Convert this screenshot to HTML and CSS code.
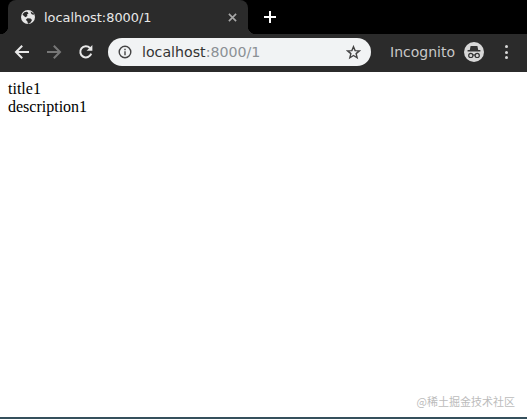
FILE: index.html
```html
<!DOCTYPE html>
<html lang="en">
<head>
    <meta charset="UTF-8">
    <title>localhost:8000/1</title>
    <link rel="stylesheet" href="styles.css">
</head>
<body>
    <div class="window">
        <!-- Tab strip -->
        <div class="tabstrip">
            <div class="tab">
                <svg class="favicon" viewBox="0 0 14 14" width="14" height="14">
                    <circle cx="7" cy="7" r="7" fill="#e6e6e6"/>
                    <path d="M1.5 4.5 C3 2 5 1.5 6.5 2 L7.5 3.4 L6 4.6 L6.4 6 L4.4 7.2 L3 6 Z M7 14 L6.4 11.4 L4.8 9.8 L6.4 8.2 L9.6 8.6 L11 10 L9.6 12.4 Z M9.5 1.4 L10.4 4 L12.6 5 L13 3.4 Z" fill="#2b2b2b"/>
                </svg>
                <span class="tab-title">localhost:8000/1</span>
                <svg class="tab-close" viewBox="0 0 10 10" width="9" height="9">
                    <path d="M1 1 L9 9 M9 1 L1 9" stroke="#a8a8a8" stroke-width="1.8"/>
                </svg>
            </div>
            <svg class="new-tab" viewBox="0 0 12 12" width="12" height="12">
                <path d="M6 0 V12 M0 6 H12" stroke="#fff" stroke-width="2"/>
            </svg>
        </div>

        <!-- Toolbar -->
        <div class="toolbar">
            <svg class="nav-icon" viewBox="0 0 16 16" width="16" height="16">
                <path d="M15 8 H2.5 M8.2 1.8 L2 8 L8.2 14.2" fill="none" stroke="#e8e8e8" stroke-width="2"/>
            </svg>
            <svg class="nav-icon" viewBox="0 0 16 16" width="16" height="16">
                <path d="M1 8 H13.5 M7.8 1.8 L14 8 L7.8 14.2" fill="none" stroke="#777" stroke-width="2"/>
            </svg>
            <svg class="nav-icon" viewBox="0 0 16 16" width="16" height="16">
                <path d="M13.2 9.6 A5.6 5.6 0 1 1 12 4" fill="none" stroke="#e8e8e8" stroke-width="2"/>
                <path d="M14.4 1 V6.8 H8.6 Z" fill="#e8e8e8"/>
            </svg>
            <div class="omnibox">
                <svg class="info-icon" viewBox="0 0 14 14" width="14" height="14">
                    <circle cx="7" cy="7" r="5.8" fill="none" stroke="#444" stroke-width="1.4"/>
                    <path d="M7 6.2 V10.2 M7 3.8 V5.2" stroke="#444" stroke-width="1.4"/>
                </svg>
                <span class="url">localhost<span class="url-rest">:8000/1</span></span>
                <svg class="star" viewBox="0 0 16 16" width="15" height="15">
                    <path d="M8 1.8 L9.7 6 L14.2 6.3 L10.8 9.2 L11.9 13.6 L8 11.2 L4.1 13.6 L5.2 9.2 L1.8 6.3 L6.3 6 Z" fill="none" stroke="#444" stroke-width="1.5"/>
                </svg>
            </div>
            <span class="incognito-label">Incognito</span>
            <svg class="incognito-icon" viewBox="0 0 20 20" width="20" height="20">
                <circle cx="10" cy="10" r="10" fill="#d8d8d8"/>
                <path d="M6.6 4 H13.4 L14.2 8 H16.4 V9.4 H3.6 V8 H5.8 Z" fill="#333"/>
                <circle cx="6.8" cy="13.4" r="2.1" fill="none" stroke="#333" stroke-width="1.2"/>
                <circle cx="13.2" cy="13.4" r="2.1" fill="none" stroke="#333" stroke-width="1.2"/>
                <path d="M8.9 13 H11.1" stroke="#333" stroke-width="1.1"/>
            </svg>
            <div class="menu">
                <span></span>
                <span></span>
                <span></span>
            </div>
        </div>

        <!-- Page -->
        <div class="page">
            <div>title1</div>
            <div>description1</div>
            <div class="watermark">@稀土掘金技术社区</div>
        </div>
    </div>
</body>
</html>
```

FILE: styles.css
```css
/* General Styles */
html, body {
    margin: 0;
    padding: 0;
}

.window {
    display: flex;
    flex-direction: column;
    width: 527px;
    height: 419px;
    overflow: hidden;
    font-family: "DejaVu Sans", sans-serif;
    border-bottom: 2px solid #35505c;
    box-sizing: border-box;
}

/* Tab strip */
.tabstrip {
    display: flex;
    align-items: center;
    height: 34px;
    background-color: #000;
}

.tab {
    position: relative;
    display: flex;
    align-items: center;
    width: 240px;
    height: 34px;
    margin-left: 8px;
    padding: 0 11px 0 13px;
    box-sizing: border-box;
    background-color: #2b2b2b;
    border-radius: 8px 8px 0 0;
}

/* curved feet at the bottom of the tab */
.tab::before,
.tab::after {
    content: "";
    position: absolute;
    bottom: 0;
    width: 8px;
    height: 8px;
}

.tab::before {
    left: -8px;
    background: radial-gradient(circle at 0 0, #000 8px, #2b2b2b 8.5px);
}

.tab::after {
    right: -8px;
    background: radial-gradient(circle at 100% 0, #000 8px, #2b2b2b 8.5px);
}

.tab-title {
    flex: 1;
    margin-left: 9px;
    color: #e8e8e8;
    font-size: 12.9px;
}

.new-tab {
    margin-left: 16px;
}

/* Toolbar */
.toolbar {
    display: flex;
    align-items: center;
    height: 38px;
    padding-bottom: 2px;
    box-sizing: border-box;
    background-color: #2b2b2b;
}

.nav-icon {
    margin-left: 16px;
}

.nav-icon:first-child {
    margin-left: 14px;
}

.omnibox {
    display: flex;
    align-items: center;
    width: 263px;
    height: 28px;
    margin-left: 14px;
    padding: 0 10px;
    box-sizing: border-box;
    background-color: #f1f3f4;
    border-radius: 14px;
}

.url {
    flex: 1;
    margin-left: 10px;
    color: #333;
    font-size: 14.2px;
}

.url-rest {
    color: #8b9094;
}

.incognito-label {
    margin-left: 19px;
    color: #c8c8c8;
    font-size: 14px;
}

.incognito-icon {
    margin-left: 9px;
}

.menu {
    display: flex;
    flex-direction: column;
    gap: 2.5px;
    margin-left: 21px;
}

.menu span {
    width: 3px;
    height: 3px;
    border-radius: 50%;
    background-color: #d8d8d8;
}

/* Page */
.page {
    position: relative;
    flex: 1;
    padding: 8px;
    background-color: #fff;
    color: #000;
    font-family: "Liberation Serif", serif;
    font-size: 16px;
}

.watermark {
    position: absolute;
    right: 12px;
    bottom: 8px;
    color: #bcbcbc;
    font-family: "Noto Sans CJK SC", sans-serif;
    font-size: 11px;
}
```
